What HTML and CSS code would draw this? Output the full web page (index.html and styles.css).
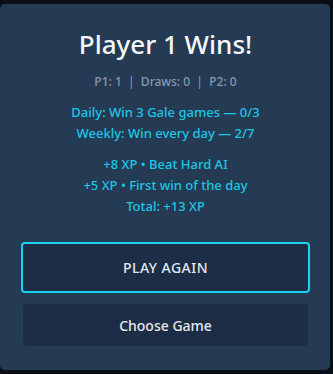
FILE: index.html
```html
<!DOCTYPE html>
<html lang="en">
<head>
    <meta charset="UTF-8">
    <meta name="viewport" content="width=device-width, initial-scale=1.0">
    <title>Game Over</title>
    <link rel="stylesheet" href="styles.css">
</head>
<body>
    <div class="result-card">
        <h1 class="result-title">Player 1 Wins!</h1>
        <div class="score-line">P1: 1 &nbsp;|&nbsp; Draws: 0 &nbsp;|&nbsp; P2: 0</div>

        <div class="challenges">
            <div>Daily: Win 3 Gale games — 0/3</div>
            <div>Weekly: Win every day — 2/7</div>
        </div>

        <div class="xp-list">
            <div>+8 XP • Beat Hard AI</div>
            <div>+5 XP • First win of the day</div>
            <div>Total: +13 XP</div>
        </div>

        <div class="actions">
            <button class="btn btn-primary">PLAY AGAIN</button>
            <button class="btn btn-secondary">Choose Game</button>
        </div>
    </div>
</body>
</html>
```

FILE: styles.css
```css
body {
    margin: 0;
    background-color: #0a0f17;
    font-family: "Noto Sans", "Open Sans", sans-serif;
}
.result-card {
    box-sizing: border-box;
    width: 330px;
    height: 366px;
    margin-top: 4px;
    padding: 23px 20px 0 21px;
    background-color: #253a53;
    border-radius: 5px;
    text-align: center;
}
.result-title {
    margin: 0;
    font-size: 26px;
    font-weight: 500;
    line-height: 34px;
    color: #f4f6f9;
}
.score-line {
    margin-top: 13px;
    font-size: 12px;
    font-weight: 500;
    line-height: 16px;
    color: #8898ab;
}
.challenges {
    margin-top: 12px;
    font-size: 13px;
    font-weight: 500;
    line-height: 21px;
    color: #1cc6e6;
}
.xp-list {
    margin-top: 10px;
    font-size: 13px;
    font-weight: 500;
    line-height: 21px;
    color: #1cc6e6;
}
.actions {
    display: flex;
    flex-direction: column;
    gap: 11px;
    margin-top: 25px;
}
.btn {
    font-family: inherit;
    color: #e4e9ef;
    background-color: #1c2d45;
    border-radius: 4px;
    cursor: pointer;
}
.btn-primary {
    height: 51px;
    border: 2px solid #17d2f0;
    font-size: 14px;
    font-weight: 500;
    letter-spacing: 0.5px;
}
.btn-secondary {
    height: 42px;
    margin: 0 2px 0 2px;
    border: none;
    font-size: 14px;
    font-weight: 500;
}
```
